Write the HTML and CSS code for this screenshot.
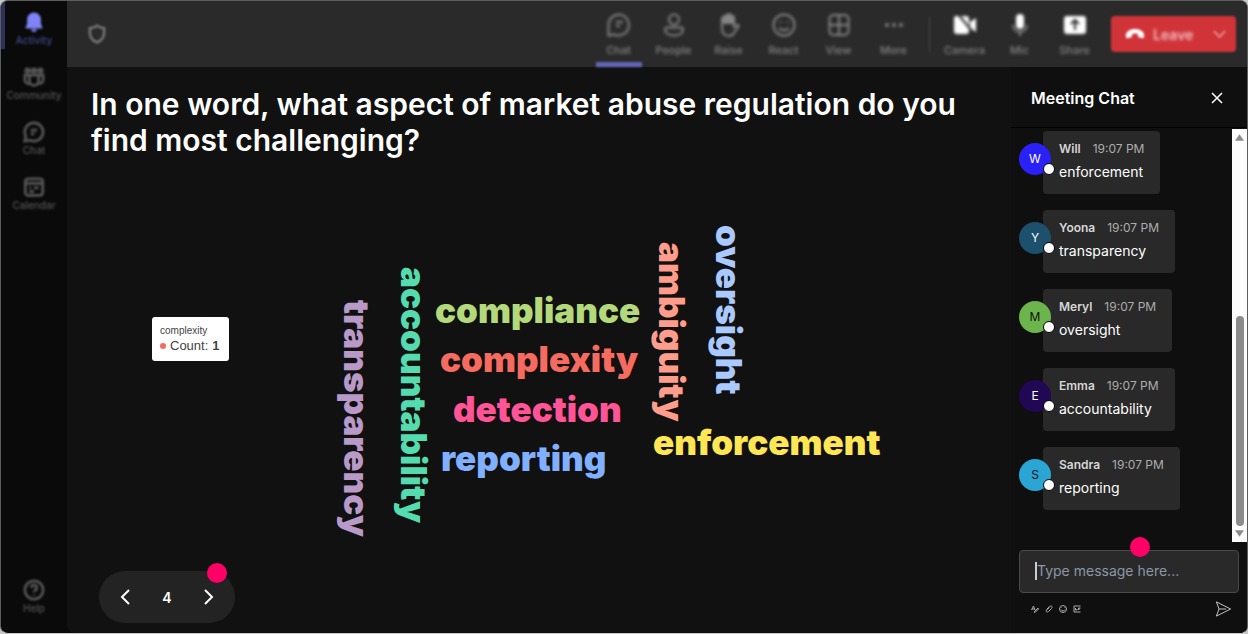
FILE: index.html
```html
<!doctype html>
<html lang="en">
<head>
	<meta charset="UTF-8">
	<title>Meeting</title>
	<link rel="stylesheet" href="styles.css">
</head>
<body>
	<div class="window">
		<nav class="sidebar">
			<button class="side-item active">
				<svg viewBox="0 0 24 24"><path class="fill" d="M12 1.500a7.500 7.500 0 0 0-7.500 7.500v5L3 17.500a1 1 0 0 0 1 1.500h16a1 1 0 0 0 1-1.500L19.500 14V9A7.500 7.500 0 0 0 12 1.500zM9 20a3 3 0 0 0 6 0z"/></svg>
				<span>Activity</span>
			</button>
			<button class="side-item">
				<svg viewBox="0 0 24 24"><circle cx="5" cy="5" r="2"/><circle cx="12" cy="5" r="2"/><circle cx="19" cy="5" r="2"/><path d="M7 10h10v6a5 5 0 0 1-10 0zM7 10H2v5a4 4 0 0 0 5 4M17 10h5v5a4 4 0 0 1-5 4"/></svg>
				<span>Community</span>
			</button>
			<button class="side-item">
				<svg viewBox="0 0 24 24"><path d="M12 2a10 10 0 1 1-4.500 19L2 22l1-5.500A10 10 0 0 1 12 2zM8.500 10h7M8.500 14h4"/></svg>
				<span>Chat</span>
			</button>
			<button class="side-item">
				<svg viewBox="0 0 24 24"><rect x="2.500" y="3" width="19" height="18" rx="3"/><path d="M2.500 8h19M7 13h2M12 13h5M7 17h5"/></svg>
				<span>Calendar</span>
			</button>
			<button class="side-item help">
				<svg viewBox="0 0 24 24"><circle cx="12" cy="12" r="10"/><path d="M9 9.500a3 3 0 1 1 4 3c-1 .5-1 1-1 2M12 17v1"/></svg>
				<span>Help</span>
			</button>
		</nav>

		<div class="content">
			<header class="topbar">
				<svg class="shield" viewBox="0 0 24 24"><path d="M12 2c3 2 5 2.500 8.500 3v6c0 6-4 9-8.500 11-4.500-2-8.500-5-8.500-11V5C7 4.500 9 4 12 2z"/></svg>
				<div class="tools">
					<button class="tool current">
						<svg viewBox="0 0 24 24"><path d="M12 1.500a10.500 10.500 0 1 1-5 20L1.500 22.500v-10A10.500 10.500 0 0 1 12 1.500zM9 9h7M9 13h4"/></svg>
						<span>Chat</span>
					</button>
					<button class="tool">
						<svg viewBox="0 0 24 24"><circle cx="12" cy="6.500" r="5"/><path d="M5 14.500h14a2 2 0 0 1 2 2c0 4-4 6-9 6s-9-2-9-6a2 2 0 0 1 2-2z"/></svg>
						<span>People</span>
					</button>
					<button class="tool">
						<svg viewBox="0 0 24 24"><path class="fill" d="M5 5l2-1 1-2 2 1 2-2 2 2 2 1v7H5z"/><path d="M5 12V5.500a1.500 1.500 0 0 1 3 0v-2a1.500 1.500 0 0 1 3 0v-1a1.500 1.500 0 0 1 3 0v2a1.500 1.500 0 0 1 3 0V14l3-2c1-.5 2 .5 1.500 1.500L17 20c-1 2-3 3-5.500 3C7 23 5 19 5 16z"/></svg>
						<span>Raise</span>
					</button>
					<button class="tool">
						<svg viewBox="0 0 24 24"><circle cx="12" cy="12" r="10.500"/><path d="M7 15c2.500 3 7.500 3 10 0M8.500 8.500v1.500M15.500 8.500v1.500"/></svg>
						<span>React</span>
					</button>
					<button class="tool">
						<svg viewBox="0 0 24 24"><rect x="2.500" y="2" width="19" height="20" rx="4"/><path d="M12 2v20M2.500 12h19"/></svg>
						<span>View</span>
					</button>
					<button class="tool">
						<svg viewBox="0 0 24 24"><g class="fill"><circle cx="5" cy="12" r="2"/><circle cx="12" cy="12" r="2"/><circle cx="19" cy="12" r="2"/></g></svg>
						<span>More</span>
					</button>
					<i class="divider"></i>
					<button class="tool bright">
						<svg viewBox="0 0 24 24"><path class="fill" d="M1 4.500A2 2 0 0 1 3 3h10a3 3 0 0 1 3 3v12a3 3 0 0 1-3 3H4a3 3 0 0 1-3-3zM17 9l6-4v14l-6-4z"/><path class="slash" d="M5 1l18 22"/></svg>
						<span>Camera</span>
					</button>
					<button class="tool bright">
						<svg viewBox="0 0 24 24"><rect class="fill" x="8" y="1" width="8" height="15" rx="4"/><path class="stand" d="M5 12c0 9 14 9 14 0M12 19v4"/></svg>
						<span>Mic</span>
					</button>
					<button class="tool bright">
						<svg viewBox="0 0 24 24"><rect class="fill" x="1" y="3" width="22" height="18" rx="3"/><path class="arrow" d="M12 17V7M8 11l4-4 4 4"/></svg>
						<span>Share</span>
					</button>
				</div>
				<button class="leave">
					<svg class="phone" viewBox="0 0 24 14"><path d="M12 1C6 1 1 4 1 9c0 2 .5 3 2 3l4-1c1 0 1.500-1 1.500-2V7c2-1 5-1 7 0v2c0 1 .5 2 1.500 2l4 1c1.500 0 2-1 2-3 0-5-5-8-11-8z"/></svg>
					<span>Leave</span>
					<svg class="more" viewBox="0 0 14 8"><path d="M1 1l6 6 6-6"/></svg>
				</button>
			</header>

			<div class="stage">
				<main class="poll">
					<h1>In one word, what aspect of market abuse regulation do you find most challenging?</h1>

					<div class="cloud">
						<span class="word transparency">transparency</span>
						<span class="word accountability">accountability</span>
						<span class="word compliance">compliance</span>
						<span class="word complexity">complexity</span>
						<span class="word detection">detection</span>
						<span class="word reporting">reporting</span>
						<span class="word ambiguity">ambiguity</span>
						<span class="word oversight">oversight</span>
						<span class="word enforcement">enforcement</span>
						<div class="tooltip">
							<p class="tip-name">complexity</p>
							<p class="tip-count"><i></i>Count: <b>1</b></p>
						</div>
					</div>

					<div class="pager">
						<button aria-label="Previous"><svg viewBox="0 0 10 16"><path d="M9 1L2 8l7 7"/></svg></button>
						<span>4</span>
						<button aria-label="Next"><svg viewBox="0 0 10 16"><path d="M1 1l7 7-7 7"/></svg></button>
						<i class="pin"></i>
					</div>
				</main>

				<aside class="chat">
					<div class="chat-head">
						<h2>Meeting Chat</h2>
						<button aria-label="Close"><svg viewBox="0 0 12 12"><path d="M1 1l10 10M11 1L1 11"/></svg></button>
					</div>
					<div class="chat-body">
						<ul class="messages">
							<li>
								<div class="avatar blue">W<i></i></div>
								<div class="bubble">
									<p class="from"><b>Will</b><time>19:07 PM</time></p>
									<p class="text">enforcement</p>
								</div>
							</li>
							<li>
								<div class="avatar teal">Y<i></i></div>
								<div class="bubble">
									<p class="from"><b>Yoona</b><time>19:07 PM</time></p>
									<p class="text">transparency</p>
								</div>
							</li>
							<li>
								<div class="avatar green">M<i></i></div>
								<div class="bubble">
									<p class="from"><b>Meryl</b><time>19:07 PM</time></p>
									<p class="text">oversight</p>
								</div>
							</li>
							<li>
								<div class="avatar purple">E<i></i></div>
								<div class="bubble">
									<p class="from"><b>Emma</b><time>19:07 PM</time></p>
									<p class="text">accountability</p>
								</div>
							</li>
							<li>
								<div class="avatar sky">S<i></i></div>
								<div class="bubble">
									<p class="from"><b>Sandra</b><time>19:07 PM</time></p>
									<p class="text">reporting</p>
								</div>
							</li>
						</ul>
						<div class="scroll">
							<svg viewBox="0 0 10 7"><path d="M5 0l5 7H0z"/></svg>
							<div class="track"><div class="thumb"></div></div>
							<svg viewBox="0 0 10 7"><path d="M0 0h10L5 7z"/></svg>
						</div>
					</div>
					<div class="composer">
						<div class="field">
							<input type="text" aria-label="Message" placeholder="Type message here...">
							<i class="caret"></i>
							<i class="pin"></i>
						</div>
						<div class="actions">
							<button aria-label="Format"><svg viewBox="0 0 16 16"><path d="M1 10L5 2l3 8M2 8h5M6 14l8-8 1 2-7 7z"/></svg></button>
							<button aria-label="Attach"><svg viewBox="0 0 16 16"><path d="M3 9l6-6c4-3 7 1 4 4l-6 6c-3 3-6 0-4-3l6-5"/></svg></button>
							<button aria-label="Emoji"><svg viewBox="0 0 16 16"><circle cx="8" cy="8" r="7"/><path d="M4 9c2 4 6 4 8 0M5 5v1M11 5v1"/></svg></button>
							<button aria-label="GIF"><svg viewBox="0 0 16 16"><path d="M15 2H2v12h13M5 6v4h3V8M11 10V6h4M11 8h3"/></svg></button>
							<button class="send" aria-label="Send"><svg viewBox="0 0 18 18"><path d="M1 1l16 8-16 8 3-8zM4 9h8"/></svg></button>
						</div>
					</div>
				</aside>
			</div>
		</div>
	</div>
</body>
</html>
```

FILE: styles.css
```css
*{
	box-sizing:border-box;
	margin:0;
	padding:0;
}
body{
	background:#c8c8c8;
	font-family:Inter, "Liberation Sans", sans-serif;
	color:#fff;
}
button{
	border:0;
	background:none;
	color:inherit;
	font-family:inherit;
	cursor:pointer;
}
svg{
	display:block;
	fill:none;
	stroke:currentColor;
	stroke-width:2;
}
svg .fill{
	fill:currentColor;
	stroke:none;
}
ul{
	list-style:none;
}
.window{
	display:flex;
	min-height:100vh;
	border:1px solid #5c5e5d;
	border-bottom-color:#c8c8c8;
	border-radius:8px;
	background:#0a0a0a;
	overflow:hidden;
}

/* left rail */
.sidebar{
	display:flex;
	flex-direction:column;
	gap:7px;
	width:66px;
	padding-bottom:16px;
}
.side-item{
	display:flex;
	flex-direction:column;
	align-items:center;
	gap:1px;
	height:48px;
	padding-top:10px;
	color:#555;
	font-size:10px;
	font-weight:500;
	line-height:13px;
}
.side-item svg{
	width:22px;
	height:22px;
	stroke-width:3;
	filter:blur(1px);
}
.side-item span{
	filter:blur(1px);
}
.side-item.active{
	box-shadow:inset 4px 0 #30305e;
	color:#464690;
}
.side-item.active svg{
	color:#7f83f5;
}
.side-item.help{
	margin-top:auto;
}

/* top bar */
.content{
	flex:1;
	display:flex;
	flex-direction:column;
	min-width:0;
	background:#111;
	border-radius:0 0 8px 8px;
}
.topbar{
	display:flex;
	align-items:center;
	height:66px;
	padding:0 11px 0 20px;
	background:#2a2a2a;
}
.shield{
	width:20px;
	height:20px;
	stroke-width:3;
	color:#777;
	filter:blur(1px);
}
.tools{
	display:flex;
	align-items:center;
	margin-left:auto;
	margin-right:9px;
}
.tool{
	display:flex;
	flex-direction:column;
	align-items:center;
	gap:6px;
	width:55px;
	height:66px;
	padding-top:12px;
	color:#858585;
	font-size:11px;
	font-weight:500;
	line-height:15px;
	filter:blur(1px);
}
.tool svg{
	width:24px;
	height:24px;
	filter:blur(1px);
}
.tool span{
	filter:blur(1px);
}
.tool.current{
	background:linear-gradient(#6264b8, #6264b8) center bottom / 46px 5px no-repeat;
}
.tool.bright svg{
	color:#fff;
}
.tool .stand{
	stroke:#8a8a8a;
}
.tool .slash,
.tool .arrow{
	stroke:#2a2a2a;
}
.divider{
	width:1px;
	height:36px;
	margin:0 7px 0 8px;
	background:#484848;
	filter:blur(1px);
}
.leave{
	display:flex;
	align-items:center;
	width:125px;
	height:36px;
	padding:0 10px 0 14px;
	border-radius:4px;
	background:#d13438;
	font-size:14px;
	font-weight:600;
	filter:blur(1px);
}
.leave .phone{
	width:20px;
	height:12px;
	margin-right:8px;
	fill:#fff;
	stroke:none;
}
.leave span{
	color:#f0bfc0;
	filter:blur(1px);
}
.leave .more{
	width:13px;
	height:8px;
	margin-left:auto;
	color:#e89193;
}

/* question */
.stage{
	flex:1;
	display:flex;
}
.poll{
	flex:1;
	display:flex;
	flex-direction:column;
	position:relative;
	padding:19px 24px 10px;
}
.poll h1{
	font-size:30px;
	font-weight:600;
	line-height:36px;
}

/* word cloud */
.cloud{
	position:absolute;
	left:0;
	top:0;
}
.word{
	position:absolute;
	font-size:35px;
	font-weight:900;
	line-height:35px;
	white-space:nowrap;
}
.compliance{
	left:368px;
	top:226px;
	color:#b3d97b;
}
.complexity{
	left:373px;
	top:275px;
	color:#f66b5f;
}
.detection{
	left:386px;
	top:325px;
	color:#ff5496;
}
.reporting{
	left:374px;
	top:374px;
	color:#80b0ff;
}
.enforcement{
	left:586px;
	top:358px;
	color:#ffe655;
}
.transparency,
.accountability,
.ambiguity,
.oversight{
	writing-mode:vertical-rl;
}
.transparency{
	left:272px;
	top:233px;
	color:#b899c8;
}
.accountability{
	left:329px;
	top:200px;
	color:#55dcae;
}
.ambiguity{
	left:587px;
	top:175px;
	color:#ff9d8c;
}
.oversight{
	left:644px;
	top:158px;
	color:#a9c9ff;
}
.tooltip{
	position:absolute;
	left:85px;
	top:250px;
	width:77px;
	padding:7px 8px;
	border-radius:3px;
	background:#fff;
	color:#444;
	font-family:"Liberation Sans", Arial, sans-serif;
	white-space:nowrap;
}
.tip-name{
	font-size:10px;
	line-height:14px;
}
.tip-count{
	display:flex;
	align-items:center;
	gap:4px;
	font-size:13px;
	line-height:16px;
}
.tip-count i{
	width:6px;
	height:6px;
	border-radius:50%;
	background:#f66b5f;
}

/* pager */
.pager{
	display:flex;
	align-items:center;
	justify-content:space-between;
	align-self:flex-start;
	position:relative;
	width:136px;
	height:52px;
	margin:auto 0 0 8px;
	padding:0 20px;
	border-radius:26px;
	background:#232323;
	font-size:14px;
	font-weight:600;
}
.pager svg{
	width:10px;
	height:16px;
	margin:0 1px;
}
.pin{
	position:absolute;
	width:20px;
	height:20px;
	border-radius:50%;
	background:#ff0066;
}
.pager .pin{
	right:8px;
	top:-8px;
}

/* chat panel */
.chat{
	display:flex;
	flex-direction:column;
	width:236px;
	background:#0f0f0f;
}
.chat-head{
	display:flex;
	align-items:center;
	justify-content:space-between;
	height:61px;
	padding:2px 24px 0 20px;
	border-bottom:1px solid #000;
}
.chat-head h2{
	font-size:16px;
	font-weight:600;
	line-height:20px;
}
.chat-head svg{
	width:12px;
	height:12px;
	stroke-width:1.5;
}
.chat-body{
	flex:1;
	display:flex;
	padding-top:1px;
}
.messages{
	flex:1;
	display:flex;
	flex-direction:column;
	gap:16px;
	padding:2px 8px 0;
}
.messages li{
	display:flex;
	align-items:flex-start;
}
.avatar{
	position:relative;
	width:32px;
	height:32px;
	margin:12px -8px 0 0;
	border-radius:50%;
	font-size:12px;
	line-height:32px;
	text-align:center;
}
.avatar i{
	position:absolute;
	left:24px;
	top:20px;
	width:12px;
	height:12px;
	border:1px solid #000;
	border-radius:50%;
	background:#fff;
}
.blue{
	background:#2921f5;
}
.teal{
	background:#1c506c;
}
.green{
	background:#6cb54c;
	color:#111;
}
.purple{
	background:#200855;
}
.sky{
	background:#2ba5d3;
	color:#111;
}
.bubble{
	height:63px;
	padding:9px 16px;
	border-radius:4px;
	background:#292929;
}
.from{
	display:flex;
	gap:12px;
	color:#d6d6d6;
	font-size:12px;
	line-height:18px;
}
.from b{
	font-weight:600;
}
.from time{
	color:#adadad;
}
.text{
	margin-top:4px;
	font-size:14px;
	line-height:20px;
}
.scroll{
	display:flex;
	flex-direction:column;
	align-items:center;
	gap:4px;
	width:15px;
	padding:5px 0;
	background:#fcfcfc;
}
.scroll svg{
	width:9px;
	height:7px;
	fill:#8b8b8b;
	stroke:none;
}
.track{
	flex:1;
	display:flex;
	align-items:flex-end;
}
.thumb{
	width:8px;
	height:55%;
	border-radius:4px;
	background:#8b8b8b;
}

/* message box */
.composer{
	padding:8px;
}
.field{
	position:relative;
}
.field input{
	display:block;
	width:100%;
	height:43px;
	padding:0 17px 2px;
	border:1px solid #4a4a4a;
	border-radius:4px;
	outline:0;
	background:#292929;
	color:#fff;
	font-family:inherit;
	font-size:14px;
}
.field input::placeholder{
	color:#8b97a6;
}
.caret{
	position:absolute;
	left:16px;
	top:12px;
	width:2px;
	height:18px;
	background:#ccc;
}
.field .pin{
	left:111px;
	top:-13px;
}
.actions{
	display:flex;
	align-items:center;
	gap:6px;
	height:32px;
	padding:0 7px 0 12px;
	color:#aaa;
}
.actions svg{
	width:8px;
	height:8px;
}
.actions .send{
	margin-left:auto;
	color:#d8d8d8;
}
.actions .send svg{
	width:17px;
	height:16px;
	stroke-width:1;
}
```
